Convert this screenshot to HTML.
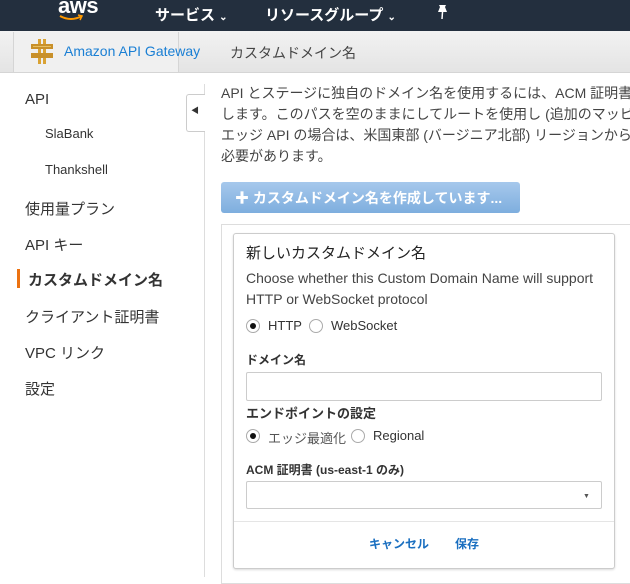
<!DOCTYPE html>
<html><head><meta charset="utf-8"><style>
*{margin:0;padding:0;box-sizing:border-box}
body{width:630px;height:577px;overflow:hidden;background:#fff;font-family:"Liberation Sans","Noto Sans CJK JP",sans-serif;color:#333;position:relative}
.abs{position:absolute;white-space:nowrap}
#top{position:absolute;left:0;top:0;width:630px;height:31px;background:#232f3e}
#bc{position:absolute;left:0;top:31px;width:630px;height:42px;background:linear-gradient(#f2f2f2,#e4e4e4);border-bottom:1px solid #d5d5d5}
.nav{font-size:15px;color:#333}
.radio{position:absolute;width:14px;height:14px;border:1px solid #aaa;border-radius:50%;background:#fff}
.radio.on::after{content:"";position:absolute;left:3px;top:3px;width:6px;height:6px;border-radius:50%;background:#111}
.lbl{font-size:12px;font-weight:bold;color:#333}
</style></head><body>
<div id="top">
<div class="abs" style="left:58px;top:-7px;color:#fff;font-size:22px;font-weight:bold;letter-spacing:-0.5px">aws</div>
<svg class="abs" style="left:58px;top:13px" width="26" height="10"><path d="M2 3 Q13 9 24 3" stroke="#f90" stroke-width="2" fill="none"/><path d="M20 2 L24 3 L22 7" stroke="#f90" stroke-width="1.5" fill="none"/></svg>
<div class="abs" style="left:155px;top:4px;color:#fff;font-size:15px;font-weight:bold">サービス <span style="font-size:10px">⌄</span></div>
<div class="abs" style="left:265px;top:4px;color:#fff;font-size:15px;font-weight:bold">リソースグループ <span style="font-size:10px">⌄</span></div>
<svg class="abs" style="left:436px;top:4px" width="14" height="16"><path d="M3 1 L10 1 L9 3 L11 8 L2 8 L4 3 Z" fill="#fff"/><path d="M6.5 8 L6 15" stroke="#fff" stroke-width="1.5"/></svg>
</div>
<div id="bc">
<div class="abs" style="left:13px;top:1px;width:166px;height:40px;background:#f0f0f0;border-left:1px solid #d5d5d5;border-right:1px solid #d5d5d5"></div>
<svg class="abs" style="left:31px;top:8px" width="22" height="25"><rect x="7" y="0" width="3" height="25" fill="#d9a233"/><rect x="12" y="0" width="3" height="25" fill="#d9a233"/><rect x="0" y="5" width="22" height="5" fill="#c8902a"/><rect x="0" y="14" width="22" height="5" fill="#c8902a"/><rect x="2" y="7" width="18" height="1" fill="#e8c060"/></svg>
<div class="abs" style="left:64px;top:12px;color:#1a7fd4;font-size:14px">Amazon API Gateway</div>
<div class="abs" style="left:230px;top:12px;color:#444;font-size:14px">カスタムドメイン名</div>
</div>
<div class="abs" style="left:204px;top:84px;width:1px;height:493px;background:#ddd"></div>
<div class="abs" style="left:186px;top:94px;width:19px;height:38px;background:#fff;border:1px solid #ccc;border-right:none;border-radius:3px 0 0 3px"></div>
<div class="abs" style="left:191px;top:105px;font-size:8px;color:#333">◀</div>
<div class="abs nav" style="left:25px;top:91px">API</div>
<div class="abs nav" style="left:45px;top:126px;font-size:13px">SlaBank</div>
<div class="abs nav" style="left:45px;top:162px;font-size:13px">Thankshell</div>
<div class="abs nav" style="left:25px;top:198px">使用量プラン</div>
<div class="abs nav" style="left:25px;top:234px">API キー</div>
<div class="abs" style="left:17px;top:269px;width:3px;height:19px;background:#ec7211"></div>
<div class="abs nav" style="left:28px;top:269px;font-weight:bold">カスタムドメイン名</div>
<div class="abs nav" style="left:25px;top:306px">クライアント証明書</div>
<div class="abs nav" style="left:25px;top:342px">VPC リンク</div>
<div class="abs nav" style="left:25px;top:378px">設定</div>
<div class="abs" style="left:221px;top:83px;font-size:14px;line-height:21px;color:#444">API とステージに独自のドメイン名を使用するには、ACM 証明書<br>します。このパスを空のままにしてルートを使用し (追加のマッピ<br>エッジ API の場合は、米国東部 (バージニア北部) リージョンから<br>必要があります。</div>
<div class="abs" style="left:221px;top:182px;width:299px;height:31px;background:linear-gradient(#a6c8ec,#7eaede);border-radius:3px;color:#fff;font-size:14px;font-weight:bold;padding:6px 0 0 14px">✚ カスタムドメイン名を作成しています...</div>
<div class="abs" style="left:221px;top:224px;width:420px;height:360px;border:1px solid #ddd"></div>
<div class="abs" style="left:233px;top:233px;width:382px;height:336px;border:1px solid #ccc;border-radius:3px;box-shadow:0 1px 2px rgba(0,0,0,.15);background:#fff"></div>
<div class="abs" style="left:246px;top:242px;font-size:15px;color:#222">新しいカスタムドメイン名</div>
<div class="abs" style="left:246px;top:268px;font-size:14px;line-height:21px;color:#444">Choose whether this Custom Domain Name will support<br>HTTP or WebSocket protocol</div>
<div class="radio on" style="left:246px;top:319px"></div>
<div class="abs" style="left:268px;top:318px;font-size:13px">HTTP</div>
<div class="radio" style="left:309px;top:319px"></div>
<div class="abs" style="left:331px;top:318px;font-size:13px">WebSocket</div>
<div class="abs lbl" style="left:246px;top:351px">ドメイン名</div>
<div class="abs" style="left:246px;top:372px;width:356px;height:29px;border:1px solid #ccc;border-radius:2px"></div>
<div class="abs" style="left:246px;top:403px;font-size:13px;font-weight:bold">エンドポイントの設定</div>
<div class="radio on" style="left:246px;top:429px"></div>
<div class="abs" style="left:268px;top:428px;font-size:13px;color:#555">エッジ最適化</div>
<div class="radio" style="left:351px;top:429px"></div>
<div class="abs" style="left:373px;top:428px;font-size:13px">Regional</div>
<div class="abs lbl" style="left:246px;top:461px">ACM 証明書 (us-east-1 のみ)</div>
<div class="abs" style="left:246px;top:481px;width:356px;height:28px;border:1px solid #ccc;border-radius:2px"></div>
<div class="abs" style="left:583px;top:493px;font-size:7px;color:#555">▼</div>
<div class="abs" style="left:234px;top:521px;width:380px;height:1px;background:#e5e5e5"></div>
<div class="abs" style="left:369px;top:535px;font-size:12px;font-weight:bold;color:#1a6fc0">キャンセル</div>
<div class="abs" style="left:455px;top:535px;font-size:12px;font-weight:bold;color:#1a6fc0">保存</div>
</body></html>
